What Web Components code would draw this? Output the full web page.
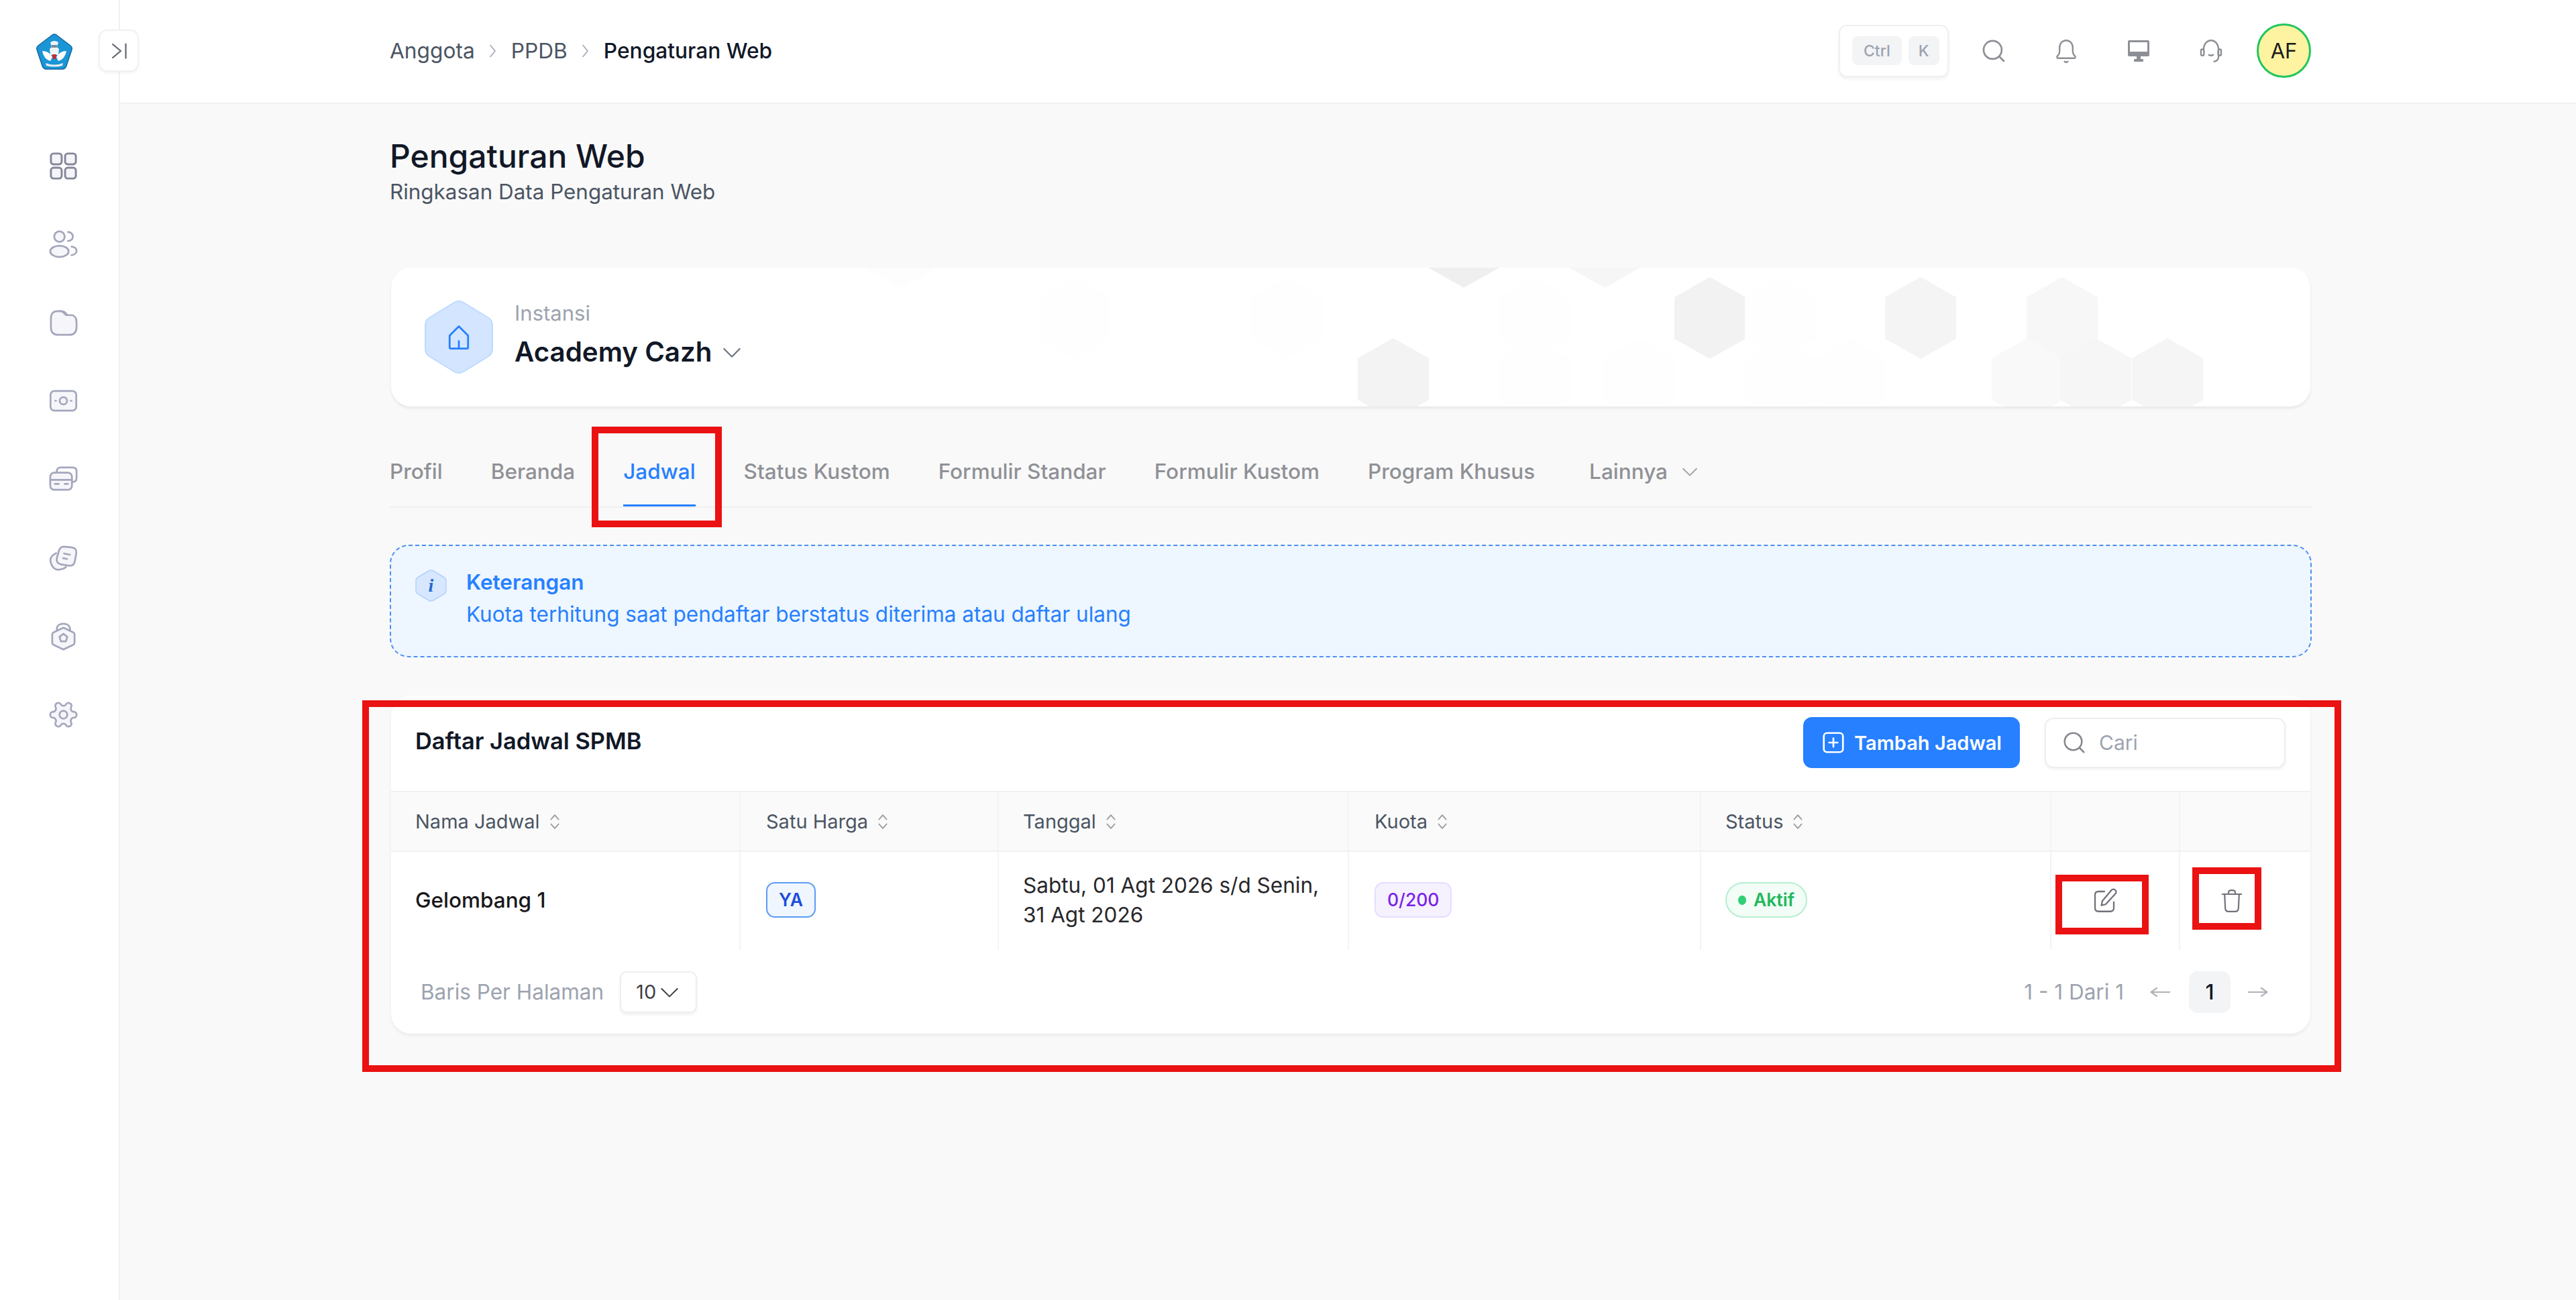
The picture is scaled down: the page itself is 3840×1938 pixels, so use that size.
<!DOCTYPE html>
<html lang="id">
<head>
<meta charset="utf-8">
<title>Pengaturan Web</title>
<style>
    html, body { margin: 0; height: 100%; }
    body { position: relative; background: #f9f9f9; font-family: Inter, "Liberation Sans", sans-serif; overflow: hidden; }
    app-shell { height: 1938px; }
</style>
</head>
<body>
<app-shell>
    <side-bar slot="side"></side-bar>
    <top-bar slot="top"></top-bar>
    <page-head></page-head>
    <instance-card></instance-card>
    <tab-bar>
        <tab-item>Profil</tab-item>
        <tab-item>Beranda</tab-item>
        <tab-item active>Jadwal</tab-item>
        <tab-item>Status Kustom</tab-item>
        <tab-item>Formulir Standar</tab-item>
        <tab-item>Formulir Kustom</tab-item>
        <tab-item>Program Khusus</tab-item>
        <tab-item more>Lainnya</tab-item>
    </tab-bar>
    <info-alert title-text="Keterangan">Kuota terhitung saat pendaftar berstatus diterima atau daftar ulang</info-alert>
    <schedule-table></schedule-table>
</app-shell>

<mark-box x="882" y="636" w="194" h="150"></mark-box>
<mark-box x="540" y="1044" w="2950" h="554"></mark-box>
<mark-box x="3064" y="1304" w="139" h="89"></mark-box>
<mark-box x="3268" y="1293" w="103" h="93"></mark-box>

<script>
// all icons live here, 24x24 box, scaled with the size attribute
const ICONS = {
    grid: '<rect x="2.5" y="2.5" width="8.2" height="8.2" rx="2"/><rect x="13.3" y="2.5" width="8.2" height="8.2" rx="2"/><rect x="2.5" y="13.3" width="8.2" height="8.2" rx="2"/><rect x="13.3" y="13.3" width="8.2" height="8.2" rx="2"/>',
    users: '<circle cx="9" cy="6" r="4"/><ellipse cx="9" cy="17.2" rx="7" ry="4.3"/><path fill="none" d="M15.5 2.5c2.3 0 3.7 1.6 3.7 3.4s-1.4 3.4-3.7 3.4"/><path fill="none" d="M18.2 13.6c2.4.3 3.8 1.6 3.8 3.2s-1.4 3-3.8 3.3"/>',
    folder: '<path d="M2.5 9c0-4 1.5-6 5-6h1.8c1.8 0 2.7.6 3.5 1.8.6.9 1.3 1.2 2.4 1.2h2.3c3 0 4.5 2.2 4.5 5.5V15c0 4-1.8 6-5.5 6H8c-3.7 0-5.5-2-5.5-6z"/><path fill="none" d="M9.5 3c3 0 3.5.6 5.5 3"/>',
    money: '<rect x="2.2" y="4.5" width="19.6" height="15" rx="3"/><circle cx="12" cy="12" r="2.8"/><path fill="none" d="M5.8 12h.6M17.6 12h.6"/>',
    cards: '<path fill="none" d="M7 6.5V5.8C7 4.3 8 3 10 3h9c2 0 3 1.3 3 3v5c0 2-1 3-3 3h-.5"/><rect x="2" y="7" width="16.5" height="13" rx="3"/><path fill="none" d="M2 12.5h16.5M5.5 15.5h3M13 15.5h2.5"/>',
    tickets: '<path d="M6.5 8.5 4.8 9.5C2.5 11 1.5 13 2.5 16c1 3 3 5.500 6.500 5 2-.3 4-1 5-2"/><path d="M8.5 7c.5-2 2-3.5 4-3.5l6 .7c2.5.3 3.8 2 3.3 4.500l-1.100 6c-.5 2.500-2 3.700-4.500 3.300l-6-1c-2.500-.4-3.700-2.200-3.200-4.700z"/><path fill="none" d="M12.5 8.8l4.5.9M11.8 12.3l3 .6"/>',
    lock: '<path fill="none" d="M7 8V6.5C7 4 9 2.5 12 2.5s5 1.5 5 4V8"/><path d="M12 5.5l7.5 3.6c.6.3 1 .9 1 1.600v6.200c0 .7-.4 1.300-1 1.600L12 22.100l-7.500-3.600c-.6-.3-1-.9-1-1.600v-6.200c0-.7.4-1.300 1-1.600z"/><path fill="none" d="M12 10.200l3 2.200-1.100 3.500h-3.800L9 12.400z"/>',
    gear: '<g transform="rotate(90 12 12)"><path d="M12.22 2h-.44a2 2 0 0 0-2 2v.18a2 2 0 0 1-1 1.73l-.43.25a2 2 0 0 1-2 0l-.15-.08a2 2 0 0 0-2.73.73l-.22.38a2 2 0 0 0 .73 2.73l.15.1a2 2 0 0 1 1 1.72v.51a2 2 0 0 1-1 1.74l-.15.09a2 2 0 0 0-.73 2.73l.22.38a2 2 0 0 0 2.73.73l.15-.08a2 2 0 0 1 2 0l.43.25a2 2 0 0 1 1 1.73V20a2 2 0 0 0 2 2h.44a2 2 0 0 0 2-2v-.18a2 2 0 0 1 1-1.73l.43-.25a2 2 0 0 1 2 0l.15.08a2 2 0 0 0 2.73-.73l.22-.39a2 2 0 0 0-.73-2.73l-.15-.08a2 2 0 0 1-1-1.74v-.5a2 2 0 0 1 1-1.74l.15-.09a2 2 0 0 0 .73-2.73l-.22-.38a2 2 0 0 0-2.73-.73l-.15.08a2 2 0 0 1-2 0l-.43-.25a2 2 0 0 1-1-1.73V4a2 2 0 0 0-2-2z"/><circle cx="12" cy="12" r="3"/></g>',
    search: '<circle cx="11" cy="11" r="8.5"/><path d="M17.5 17.5l4 4"/>',
    bell: '<path d="M12 2.5c-3.7 0-6.2 2.8-6.2 6.5v3.5c0 1.2-.5 2.3-1.2 3.1l-.9 1c-.7.8-.2 1.900.8 1.900h15c1 0 1.500-1.100.8-1.900l-.9-1c-.7-.8-1.200-1.900-1.200-3.100V9c0-3.700-2.500-6.500-6.200-6.500z"/><path d="M10.5 21.5c.9.7 2.1.7 3 0"/>',
    headset: '<path d="M5 11c0-5 3-8.5 7-8.5s7 3.5 7 8.5v6c0 2.5-1.5 4-4 4.5"/><rect x="2.5" y="10.5" width="2.8" height="5.5" rx="1.2"/><rect x="18.7" y="10.5" width="2.8" height="5.5" rx="1.2"/><path d="M10 15.5c1.2.6 2.8.6 4 0"/>',
    edit: '<path d="M12 4H7C5 4 4 5 4 7v11c0 2 1 3 3 3h10c2 0 3-1 3-3v-5"/><path d="M18 2.8c1-1 2.4-1 3.3 0 .9.9.9 2.3 0 3.2L13 15l-3.5.8.8-3.8z"/>',
    trash: '<path d="M3.5 6h17"/><path d="M9 6V4.5C9 3.3 10 2.5 12 2.5s3 .8 3 2V6"/><path d="M5.5 6l.6 12.5c.1 2 1.2 3 3 3h5.8c1.8 0 2.9-1 3-3L18.5 6"/>',
    plus: '<rect x="3" y="3" width="18" height="18" rx="3"/><path d="M12 8v8M8 12h8"/>',
    chev: '<path d="M5 9l7 7 7-7"/>',
    home: '<path d="M4.5 10.5 12 3l7.5 7.5V20c0 .6-.4 1-1 1h-13c-.6 0-1-.4-1-1z"/><path d="M12 15v6"/>',
    left: '<path d="M22 12H2.5M8.5 6l-6 6 6 6"/>',
    right: '<path d="M2 12h19.5M15.5 6l6 6-6 6"/>',
    sort: '<path d="M7.5 9 12 3.5 16.5 9M7.5 15l4.5 5.5 4.500-5.500"/>',
    expand: '<path d="M6 4l8 8-8 8M19 3.5v17"/>',
    crumb: '<path d="M8 3.5l7 8.5-7 8.5"/>',
};

// shared base: puts the markup in an open shadow root
class UiElement extends HTMLElement {
    constructor(markup) {
        super();
        const shadowRoot = this.attachShadow({ mode: 'open' });
        shadowRoot.innerHTML = markup;
    }
}

class UiIcon extends HTMLElement {
    connectedCallback() {
        const shadowRoot = this.shadowRoot || this.attachShadow({ mode: 'open' });
        const w = this.getAttribute('size') || 24;
        const h = this.getAttribute('height') || w;
        const sw = this.getAttribute('stroke') || 2;
        shadowRoot.innerHTML = `
        <style>
            :host { display: inline-flex; flex: none; color: inherit; }
            svg { display: block; }
        </style>
        <svg width="${w}" height="${h}" viewBox="0 0 24 24" preserveAspectRatio="none" fill="${this.getAttribute('fill') || 'none'}"
             stroke="currentColor" stroke-width="${sw}" stroke-linecap="round" stroke-linejoin="round">${ICONS[this.getAttribute('name')]}</svg>`;
    }
}
customElements.define('ui-icon', UiIcon);

class AppShell extends UiElement {
    constructor() {
        super(`
        <style>
            :host { display: grid; grid-template-columns: 179px 1fr; grid-template-rows: 155px 1fr; }
            .side { grid-row: 1 / 3; }
            main { padding: 49px 0 0 402px; width: 2865px; }
            ::slotted(instance-card) { margin-top: 91px; }
        </style>
        <div class="side"><slot name="side"></slot></div>
        <slot name="top"></slot>
        <main><slot></slot></main>`);
    }
}
customElements.define('app-shell', AppShell);

class SideBar extends UiElement {
    constructor() {
        const items = ['users', 'folder', 'money', 'cards', 'tickets', 'lock', 'gear'];
        super(`
        <style>
            :host { display: block; position: relative; height: 100%; background: #fff; border-right: 2px solid #f1f1f2; box-sizing: border-box; }
            .logo { position: absolute; left: 54px; top: 50px; }
            .toggle { position: absolute; left: 147px; top: 44px; width: 60px; height: 63px; box-sizing: border-box;
                background: #fff; border: 2px solid #f1f1f3; border-radius: 13px; display: flex; align-items: center;
                justify-content: center; color: #666a72; box-shadow: 0 2px 4px rgba(0, 0, 0, .05); z-index: 2; }
            nav { display: flex; flex-direction: column; align-items: center; gap: 69.8px; padding: 224px 0 0 12px; color: #a4a7bd; }
            nav ui-icon:first-child { color: #85879a; }
        </style>
        <svg class="logo" width="54" height="54" viewBox="0 0 54 54">
            <path d="M24 2 Q27 0 30 2 L51 18 Q54 20 53 24 L45 48 Q44 52 40 53 L14 53 Q10 52 9 48 L1 24 Q0 20 3 18 Z" fill="#1a95d6" stroke="#16689f" stroke-width="1.500"/>
            <path d="M21 13 q6-4 12 0 l-2 7 3 3 -1 9 h-12 l-1-9 3-3 z" fill="#eef3f5"/>
            <path d="M23 17h8v4h-8z" fill="#7d8a94"/>
            <path d="M9 26 q10 0 15 9 l-3 6 q-10-3-12-15z M45 26 q-10 0-15 9 l3 6 q10-3 12-15z" fill="#fff"/>
            <path d="M24 31h6l-1 7h-4z" fill="#d5242c"/>
            <path d="M14 44 q13 5 26 0 l-1 4 q-12 3-24 0z" fill="#e8edf0"/>
        </svg>
        <div class="toggle"><ui-icon name="expand" size="36" height="30" stroke="1.500"></ui-icon></div>
        <nav>
            <ui-icon name="grid" size="47" fill="#f5f5f9" stroke="1.500"></ui-icon>
            ${items.map(n => `<ui-icon name="${n}" size="47" fill="#f6f6fa" stroke="1.400"></ui-icon>`).join('')}
        </nav>`);
    }
}
customElements.define('side-bar', SideBar);

class TopBar extends UiElement {
    constructor() {
        super(`
        <style>
            :host { display: flex; align-items: center; background: #fff; border-bottom: 2px solid #f1f1f1; box-sizing: border-box;
                height: 155px; padding: 0 395px 2px 402px; font-size: 31.7px; }
            .crumbs { display: flex; align-items: center; color: #4b5563; flex: 1; }
            .crumbs b { font-weight: 500; color: #111827; }
            .crumbs ui-icon { margin: 0 15px; color: #9ca3af; }
            .kbd { display: flex; gap: 10px; align-items: center; box-sizing: border-box; width: 164px; height: 78px; padding: 0 18px;
                border: 2px solid #f0f0f2; border-radius: 12px; box-shadow: 0 3px 5px rgba(0, 0, 0, .06); margin-right: 48px; }
            kbd { font: 500 23px Inter, sans-serif; color: #9ca3af; background: #f3f4f6; border-radius: 8px; height: 43px;
                display: flex; align-items: center; justify-content: center; padding: 0 17px; }
            kbd + kbd { padding: 0 15px; }
            .acts { display: flex; align-items: center; gap: 70px; color: #8d8f96; margin-right: 49px; }
            .mon { display: block; margin: 0 3px; }
            .avatar { width: 81px; height: 81px; box-sizing: border-box; border-radius: 50%; background: #fdf3a1; border: 3px solid #22c55e;
                display: flex; align-items: center; justify-content: center; font-size: 31px; font-weight: 400; color: #1b1b1b; }
        </style>
        <div class="crumbs">
            <span>Anggota</span><ui-icon name="crumb" size="24" stroke="1.500"></ui-icon>
            <span>PPDB</span><ui-icon name="crumb" size="24" stroke="1.500"></ui-icon>
            <b>Pengaturan Web</b>
        </div>
        <div class="kbd"><kbd>Ctrl</kbd><kbd>K</kbd></div>
        <div class="acts">
            <ui-icon name="search" size="38" stroke="1.700"></ui-icon>
            <ui-icon name="bell" size="38" height="40" stroke="1.500"></ui-icon>
            <svg class="mon" width="32" height="32" viewBox="0 0 32 32" fill="currentColor"><path fill-rule="evenodd" d="M2 0h28a2 2 0 0 1 2 2v20a2 2 0 0 1-2 2H2a2 2 0 0 1-2-2V2a2 2 0 0 1 2-2z M3 3v14h26V3z"/><rect x="13" y="24" width="6" height="5"/><rect x="9" y="28" width="14" height="4" rx="1"/></svg>
            <ui-icon name="headset" size="38" height="40" stroke="1.500"></ui-icon>
        </div>
        <div class="avatar">AF</div>`);
    }
}
customElements.define('top-bar', TopBar);

class PageHead extends UiElement {
    constructor() {
        super(`
        <style>
            :host { display: block; }
            h1 { margin: 0; font: 500 48px/58px Inter, sans-serif; color: #111827; }
            p { margin: 2px 0 0; font: 400 31.4px/44px Inter, sans-serif; color: #4b5563; }
        </style>
        <h1>Pengaturan Web</h1>
        <p>Ringkasan Data Pengaturan Web</p>`);
    }
}
customElements.define('page-head', PageHead);

class InstanceCard extends UiElement {
    constructor() {
        // hex pattern: [centre x inside the card, top tip y inside the card, grey]
        const hexes = [
            [1599, -92, '#efefef'], [1809, -92, '#f6f6f6'], [1966, 14, '#f2f2f2'], [2280, 14, '#f4f4f4'], [2491, 14, '#f7f7f7'],
            [1494, 105, '#f3f3f3'], [2439, 105, '#f9f9f9'], [2541, 105, '#f6f6f6'], [2648, 105, '#f5f5f5'],
            [1019, 14, '#fefefe'], [1335, 14, '#fefefe'], [1704, 14, '#fefefe'], [2071, 14, '#fefefe'],
            [1704, 105, '#fefefe'], [2176, 105, '#fefefe'], [1860, 105, '#fefefe'], [2071, 105, '#fefefe'], [760, -92, '#fdfdfd'],
        ];
        const poly = ([x, y, c]) => `<polygon fill="${c}" points="${x},${y} ${x + 53},${y + 30} ${x + 53},${y + 92} ${x},${y + 122} ${x - 53},${y + 92} ${x - 53},${y + 30}"/>`;
        super(`
        <style>
            :host { display: flex; align-items: center; position: relative; overflow: hidden; box-sizing: border-box; height: 207px;
                margin: 0 2px; padding-left: 50px; background: #fff; border-radius: 30px; box-shadow: 0 3px 4px rgba(0, 0, 0, .07); }
            .bg { position: absolute; inset: 0; }
            .hex { position: relative; width: 102px; height: 109px; display: flex; align-items: center; justify-content: center; margin-right: 32px; color: #2680ff; }
            .hex svg { position: absolute; inset: 0; }
            .hex ui-icon { position: relative; }
            .txt { position: relative; margin-top: -8px; }
            small { display: block; font: 400 31px/40px Inter, sans-serif; color: #9ca3af; }
            strong { display: flex; align-items: center; gap: 10px; margin-top: 12px; font: 600 40.3px/52px Inter, sans-serif; color: #111827; }
            strong ui-icon { color: #6b7280; }
        </style>
        <svg class="bg" width="2861" height="207">${hexes.map(poly).join('')}</svg>
        <div class="hex">
            <svg width="102" height="109" viewBox="0 0 102 109"><path d="M44 3q7-4 14 0l36 22q7 4 7 12v35q0 8-7 12l-36 22q-7 4-14 0l-36-22q-7-4-7-12v-35q0-8 7-12z" fill="#d3e5ff" stroke="#bfdaff" stroke-width="2"/></svg>
            <ui-icon name="home" size="44" height="44" stroke="1.500"></ui-icon>
        </div>
        <div class="txt">
            <small>Instansi</small>
            <strong>Academy Cazh <ui-icon name="chev" size="40" stroke="1.300"></ui-icon></strong>
        </div>`);
    }
}
customElements.define('instance-card', InstanceCard);

class TabBar extends UiElement {
    constructor() {
        super(`
        <style>
            :host { display: flex; gap: 72px; margin-top: 77px; border-bottom: 2px solid #f0f0f0; }
        </style>
        <slot></slot>`);
    }
}
customElements.define('tab-bar', TabBar);

class TabItem extends UiElement {
    constructor() {
        super(`
        <style>
            :host { display: inline-flex; align-items: center; gap: 16px; position: relative; height: 72px;
                font: 500 31.5px/40px Inter, sans-serif; color: #8f9196; }
            span { display: block; height: 72px; line-height: 40px; box-sizing: border-box; }
            :host([active]) { color: #2680ff; }
            :host([active]) span { border-bottom: 3px solid #2680ff; }
            :host([more]) { margin-left: 9px; }
            ui-icon { display: none; margin-top: -32px; color: #a3a5aa; }
            :host([more]) ui-icon { display: inline-flex; }
        </style>
        <span><slot></slot></span>
        <ui-icon name="chev" size="34" stroke="1.400"></ui-icon>`);
    }
}
customElements.define('tab-item', TabItem);

class InfoAlert extends UiElement {
    constructor() {
        super(`
        <style>
            :host { display: flex; box-sizing: border-box; height: 168px; margin-top: 55px; padding: 35px 36px; gap: 29px;
                background: #eef6ff; border: 2px dashed #4d90f0; border-radius: 28px; color: #2680ff; }
            .icon { flex: none; width: 47px; height: 48px; position: relative; display: flex; align-items: center; justify-content: center;
                font: italic 700 28px "Liberation Serif", serif; color: #2468c9; }
            .icon svg { position: absolute; inset: 0; }
            .icon span { position: relative; }
            .text { margin-top: -3px; }
            h4 { margin: 0; font: 600 31.5px/44px Inter, sans-serif; }
            p { margin: 4px 0 0; font: 400 31.5px/44px Inter, sans-serif; }
        </style>
        <div class="icon">
            <svg width="47" height="48" viewBox="0 0 47 48"><path d="M20 2q3.5-2 7 0l15 9q4 2 4 6v14q0 4-4 6l-15 9q-3.5 2-7 0l-15-9q-4-2-4-6V17q0-4 4-6z" fill="#d6e7ff" stroke="#b4d2fb" stroke-width="1.500"/></svg>
            <span>i</span>
        </div>
        <div class="text">
            <h4></h4>
            <p><slot></slot></p>
        </div>`);
    }
    connectedCallback() {
        this.shadowRoot.querySelector('h4').textContent = this.getAttribute('title-text');
    }
}
customElements.define('info-alert', InfoAlert);

class StatusPill extends UiElement {
    constructor() {
        super(`
        <style>
            :host { display: inline-flex; align-items: center; box-sizing: border-box; height: 53px; padding: 0 17px; border-radius: 13px;
                font: 600 26.5px/1 Inter, sans-serif; border: 2px solid; }
            :host([tone="blue"]) { color: #1d4ed8; background: #eff6ff; border-color: #5c9bf5; }
            :host([tone="purple"]) { color: #7c22e6; background: #f5f1ff; border-color: #e6dcff; font-weight: 500; }
            :host([tone="green"]) { color: #22b85c; background: #f1fdf6; border-color: #b6efcf; border-radius: 27px; }
            i { display: none; width: 12px; height: 14px; border-radius: 50%; background: #2fcf75; margin-right: 11px; }
            :host([tone="green"]) i { display: block; }
        </style>
        <i></i><slot></slot>`);
    }
}
customElements.define('status-pill', StatusPill);

class ScheduleTable extends UiElement {
    constructor() {
        const head = ['Nama Jadwal', 'Satu Harga', 'Tanggal', 'Kuota', 'Status'];
        super(`
        <style>
            :host { display: block; box-sizing: border-box; height: 504px; margin: 57px 2px 0; background: #fff; border-radius: 30px;
                box-shadow: 0 3px 5px rgba(0, 0, 0, .06); overflow: hidden; font: 400 31.5px Inter, sans-serif; color: #27272a; }
            .bar { display: flex; align-items: center; box-sizing: border-box; height: 142px; padding: 0 37px 2px 36px; gap: 37px; }
            h3 { flex: 1; margin: -5px 0 0; font: 600 34.4px Inter, sans-serif; color: #111827; }
            button { display: flex; align-items: center; gap: 12px; box-sizing: border-box; width: 323px; height: 76px; padding: 0 0 0 26px; border: 0; border-radius: 13px;
                background: #2680ff; color: #fff; font: 600 29px Inter, sans-serif; }
            .find { display: flex; align-items: center; gap: 19px; box-sizing: border-box; width: 359px; height: 75px; padding: 0 24px; border: 2px solid #eeeef0;
                border-radius: 13px; color: #9ca3af; box-shadow: 0 2px 4px rgba(0, 0, 0, .06); background: #fff; font-size: 30px; }
            .grid { display: grid; grid-template-columns: 521px 385px 522px 525px 522px 192px 194px; grid-template-rows: 91px 146px; }
            .h, .c { box-sizing: border-box; display: flex; align-items: center; padding: 0 36px 0 38px; border-right: 2px solid #f4f4f5; }
            .h { background: #fafafa; border-top: 2px solid #f1f1f2; border-bottom: 2px solid #f1f1f2; gap: 7px; color: #4b5563; font-size: 29px; }
            .h ui-icon { color: #9a9ca3; }
            .c { line-height: 44px; padding-bottom: 3px; }
            .pad36 { padding-left: 36px; }
            .first { font-weight: 500; color: #18181b; }
            .last { border-right: 0; }
            .act { justify-content: center; padding: 0 32px 0 0; color: #71717a; }
            .act.last { padding-right: 40px; }
            .foot { display: flex; align-items: center; height: 125px; padding: 0 61px 2px 44px; color: #9ca3af; }
            .sel { display: flex; align-items: center; gap: 0; box-sizing: border-box; width: 115px; height: 62px; margin-left: 24px; padding-left: 22px; border: 2px solid #eeeef0;
                border-radius: 10px; color: #3f3f46; box-shadow: 0 3px 4px rgba(0, 0, 0, .06); font-size: 29px; }
            .sp { flex: 1; }
            .page { display: flex; align-items: center; justify-content: center; width: 62px; height: 62px; border-radius: 13px; background: #f3f4f6; color: #111827;
                font-weight: 500; margin: 0 24px 0 26px; }
            .arr { margin-left: 37px; color: #b0b2b8; }
            .arr2 { color: #b0b2b8; }
        </style>
        <div class="bar">
            <h3>Daftar Jadwal SPMB</h3>
            <button><ui-icon name="plus" size="38" stroke="1.700"></ui-icon>Tambah Jadwal</button>
            <div class="find"><ui-icon name="search" size="36" stroke="1.700" style="color:#85878e"></ui-icon>Cari</div>
        </div>
        <div class="grid">
            ${head.map((t, i) => `<div class="h ${i === 0 || i === 2 || i === 4 ? 'pad36' : ''}">${t}<ui-icon name="sort" size="30" height="28" stroke="1.500"></ui-icon></div>`).join('')}
            <div class="h"></div><div class="h last"></div>
            <div class="c first pad36">Gelombang 1</div>
            <div class="c"><status-pill tone="blue">YA</status-pill></div>
            <div class="c pad36"><span>Sabtu, 01 Agt 2026 s/d Senin, 31 Agt 2026</span></div>
            <div class="c"><status-pill tone="purple">0/200</status-pill></div>
            <div class="c pad36"><status-pill tone="green">Aktif</status-pill></div>
            <div class="c act"><ui-icon name="edit" size="42" stroke="1.300"></ui-icon></div>
            <div class="c act last"><ui-icon name="trash" size="40" stroke="1.300"></ui-icon></div>
        </div>
        <div class="foot">
            <span>Baris Per Halaman</span>
            <div class="sel">10<ui-icon name="chev" size="40" stroke="1.200"></ui-icon></div>
            <span class="sp"></span>
            <span>1 - 1 Dari 1</span>
            <ui-icon class="arr" name="left" size="34" height="24" stroke="1.800"></ui-icon>
            <div class="page">1</div>
            <ui-icon class="arr2" name="right" size="34" height="24" stroke="1.800"></ui-icon>
        </div>`);
    }
}
customElements.define('schedule-table', ScheduleTable);

// the red review rectangles drawn on top of the screenshot
class MarkBox extends UiElement {
    constructor() {
        super(`<style>
            :host { display: block; position: absolute; box-sizing: border-box; border: 10px solid #ea1212; pointer-events: none; }
        </style>`);
    }
    connectedCallback() {
        this.style.left = this.getAttribute('x') + 'px';
        this.style.top = this.getAttribute('y') + 'px';
        this.style.width = this.getAttribute('w') + 'px';
        this.style.height = this.getAttribute('h') + 'px';
    }
}
customElements.define('mark-box', MarkBox);
</script>
</body>
</html>
